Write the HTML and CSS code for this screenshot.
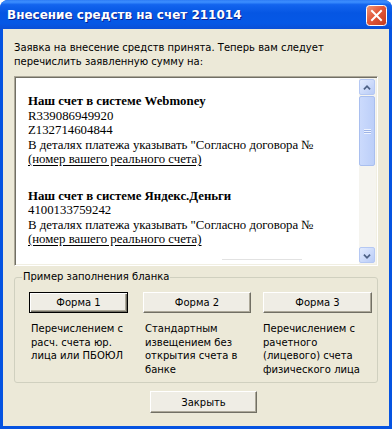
FILE: index.html
```html
<!DOCTYPE html>
<html lang="ru">
<head>
  <meta charset="UTF-8" />
  <title>Внесение средств на счет 211014</title>
  <link rel="stylesheet" href="styles.css">
</head>
<body>
  <div class="window">
    <div class="titlebar">
      <span class="title">Внесение средств на счет 211014</span>
      <span class="close-btn">
        <svg width="21" height="21" viewBox="0 0 21 21">
          <defs>
            <linearGradient id="red" x1="0" y1="0" x2="1" y2="1">
              <stop offset="0" stop-color="#F09A7A"/>
              <stop offset="0.45" stop-color="#E2583A"/>
              <stop offset="1" stop-color="#C23A1E"/>
            </linearGradient>
          </defs>
          <rect x="0.5" y="0.5" width="20" height="20" rx="3" fill="url(#red)" stroke="#fff"/>
          <path d="M6 6 L15 15 M15 6 L6 15" stroke="#fff" stroke-width="2" stroke-linecap="square"/>
        </svg>
      </span>
    </div>

    <div class="client">
      <p class="intro">Заявка на внесение средств принята. Теперь вам следует<br>перечислить заявленную сумму на:</p>

      <div class="textbox">
        <div class="textbox-content">
          <div class="account">
            <b>Наш счет в системе Webmoney</b><br>
            R339086949920<br>
            Z132714604844<br>
            В деталях платежа указывать "Согласно договора №<br>
            <u>(номер вашего реального счета)</u>
          </div>
          <div class="account">
            <b>Наш счет в системе Яндекс.Деньги</b><br>
            4100133759242<br>
            В деталях платежа указывать "Согласно договора №<br>
            <u>(номер вашего реального счета)</u>
          </div>
          <div class="rule"></div>
        </div>
        <div class="scrollbar">
          <div class="sb-btn">
            <svg width="16" height="16" viewBox="0 0 16 16"><path d="M4.5 9.5 L8 6 L11.5 9.5" fill="none" stroke="#4D6185" stroke-width="2"/></svg>
          </div>
          <div class="sb-track">
            <div class="sb-thumb"><span class="grip"></span></div>
          </div>
          <div class="sb-btn">
            <svg width="16" height="16" viewBox="0 0 16 16"><path d="M4.5 6.5 L8 10 L11.5 6.5" fill="none" stroke="#4D6185" stroke-width="2"/></svg>
          </div>
        </div>
      </div>

      <fieldset class="group">
        <legend>Пример заполнения бланка</legend>
        <div class="forms">
          <div class="form-col">
            <button class="btn btn-default form1">Форма 1</button>
            <p class="desc">Перечислением с<br>расч. счета юр.<br>лица или ПБОЮЛ</p>
          </div>
          <div class="form-col">
            <button class="btn form2">Форма 2</button>
            <p class="desc">Стандартным<br>извещением без<br>открытия счета в<br>банке</p>
          </div>
          <div class="form-col">
            <button class="btn form3">Форма 3</button>
            <p class="desc flush">Перечислением с<br>рачетного<br>(лицевого) счета<br>физического лица</p>
          </div>
        </div>
      </fieldset>

      <div class="footer">
        <button class="btn close">Закрыть</button>
      </div>
    </div>
  </div>
</body>
</html>
```

FILE: styles.css
```css
body {
  margin: 0;
  background: #ffffff;
  font-family: "DejaVu Sans", sans-serif;
  font-size: 10px;
  color: #000;
}
.window {
  width: 392px;
  height: 429px;
  display: flex;
  flex-direction: column;
  background: #0553E1;
  border-radius: 8px 8px 0 0;
  overflow: hidden;
}
.titlebar {
  height: 29px;
  flex: none;
  display: flex;
  align-items: center;
  justify-content: space-between;
  padding: 0 5px 0 7px;
  background: linear-gradient(to bottom, #2E7CF5 0%, #3D8FFF 7%, #1364EE 16%, #0556E3 45%, #0558E6 80%, #0A4FD6 100%);
}
.title {
  color: #fff;
  font-weight: bold;
  font-size: 12px;
  text-shadow: 1px 1px #0A2290;
}
.close-btn {
  display: flex;
  margin-top: 1px;
}
.client {
  flex: 1;
  margin: 0 3px 3px;
  background: #ECE9D8;
  padding: 12px 11px 0;
  display: flex;
  flex-direction: column;
}
.intro {
  margin: 0;
  line-height: 14px;
}
.textbox {
  margin-top: 7px;
  height: 190px;
  box-sizing: border-box;
  display: flex;
  background: #fff;
  border: 1px solid;
  border-color: #ACA899 #fff #fff #ACA899;
  box-shadow: inset 1px 1px #716F64, inset -1px -1px #F1EFE2;
  padding: 1px;
}
.textbox-content {
  flex: 1;
  overflow: hidden;
  padding: 16px 0 0 12px;
  font-family: "Liberation Serif", serif;
  font-size: 12.8px;
  line-height: 14.5px;
  white-space: nowrap;
}
.account {
  margin-bottom: 22px;
}
.account u {
  text-underline-offset: 2px;
}
.rule {
  margin: -10px 0 0 194px;
  width: 80px;
  height: 1px;
  background: #E2E2E2;
}
.scrollbar {
  width: 17px;
  display: flex;
  flex-direction: column;
  background: #F5F4EF;
}
.sb-btn {
  height: 16px;
  margin: 1px 1px 0 0;
  border: 1px solid #B5C8F3;
  border-radius: 2px;
  background: linear-gradient(to bottom right, #E2EBFE, #B9CCF7);
  display: flex;
  box-sizing: border-box;
}
.sb-btn:last-child {
  margin: 0 1px 1px 0;
}
.sb-track {
  flex: 1;
  padding: 1px 1px 0 0;
}
.sb-thumb {
  height: 70px;
  border: 1px solid #A9BFEF;
  border-radius: 2px;
  background: linear-gradient(to right, #CBDAFC, #BCCFF9);
  display: flex;
  align-items: center;
  justify-content: center;
  box-sizing: border-box;
}
.grip {
  width: 7px;
  height: 5px;
  background: repeating-linear-gradient(to bottom, #EEF3FE 0 1px, #9DB3E6 1px 2px);
}
.group {
  margin: 4px 0 0;
  padding: 8px 0 6px 7px;
  border: 1px solid #D0D0BF;
  border-radius: 3px;
}
.group legend {
  padding: 0 1px;
  line-height: 14px;
}
.forms {
  display: grid;
  grid-template-columns: 114px 120px auto;
  margin-left: 7px;
}
.desc {
  margin: 9px 0 0 2px;
  line-height: 13.5px;
}
.desc.flush {
  margin-left: 0;
}
.btn {
  font-family: "DejaVu Sans", sans-serif;
  font-size: 10px;
  color: #000;
  height: 21px;
  padding: 0;
  background: #EFEDE5;
  border: 1px solid;
  border-color: #fff #716F64 #716F64 #fff;
  box-shadow: inset -1px -1px #ACA899;
}
.btn-default {
  border: 1px solid #000;
  box-shadow: inset 1px 1px #fff, inset -1px -1px #716F64, inset -2px -2px #ACA899;
}
.form1 {
  width: 99px;
}
.form2 {
  width: 108px;
}
.form3 {
  width: 109px;
}
.footer {
  margin-top: 8px;
  padding-left: 136px;
}
.close {
  width: 107px;
  height: 22px;
}
```
